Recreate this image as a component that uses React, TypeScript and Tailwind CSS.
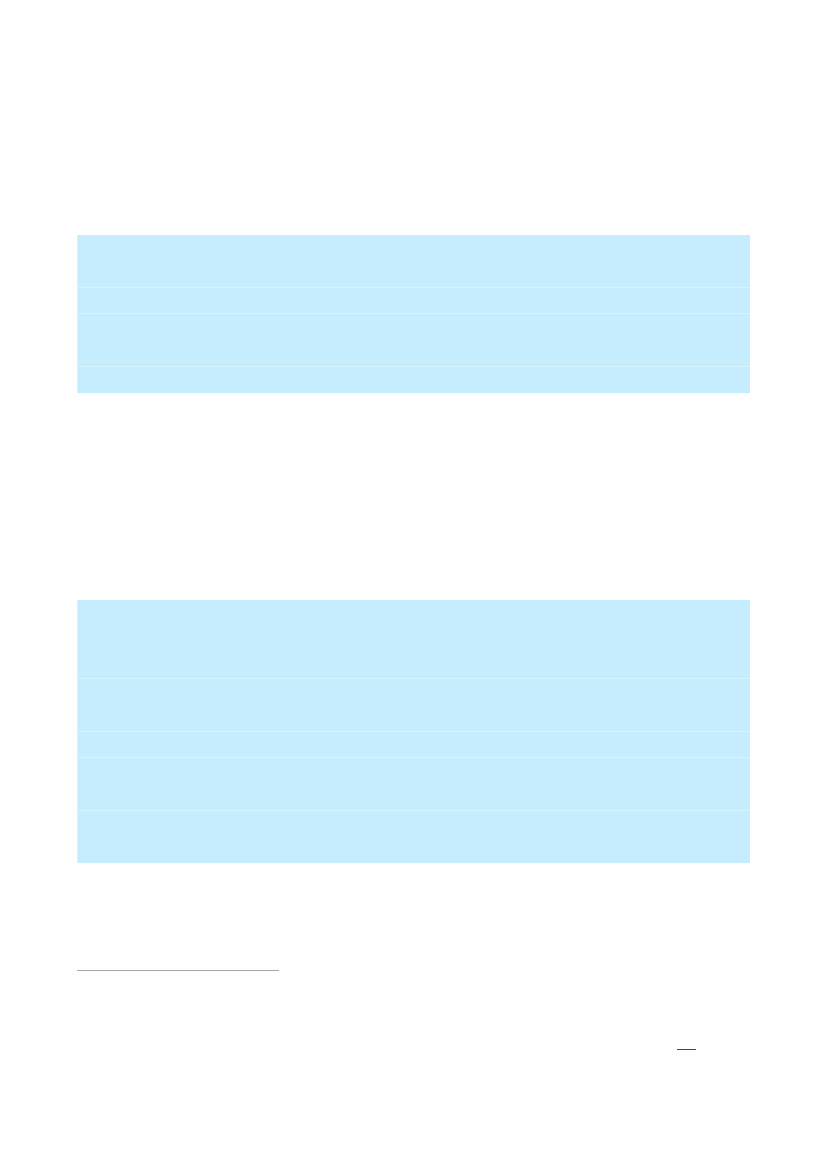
// heights include the 1px top rule of every row after the first
const table1 = [52, 26, 53, 27]
const table2 = [78, 53, 26, 53, 53]

function ShadedTable({ rows }: { rows: number[] }) {
  return (
    <div className="flex flex-col bg-[#c5edfe] border-l border-[#d4f2fe]">
      {rows.map((h, i) => (
        <div
          key={i}
          className={i === 0 ? "" : "border-t border-[#d6f3fe]"}
          style={{ height: h }}
        />
      ))}
    </div>
  )
}

export default function App() {
  return (
    <div className="w-[827px] h-[1169px] bg-white font-['Liberation_Sans',sans-serif]">
      <div className="mx-[77px] pt-[235px] flex flex-col">
        {/* first shaded table */}
        <ShadedTable rows={table1} />

        {/* second shaded table */}
        <div className="mt-[207px]">
          <ShadedTable rows={table2} />
        </div>

        {/* footnote separator */}
        <div className="mt-[107px] w-[202px] h-px bg-[#a6a6a6]" />

        {/* link underline */}
        <div className="mt-[78px] flex justify-end pr-[54px]">
          <span className="block w-[19px] h-px bg-[#1f4e79]" />
        </div>
      </div>
    </div>
  )
}
